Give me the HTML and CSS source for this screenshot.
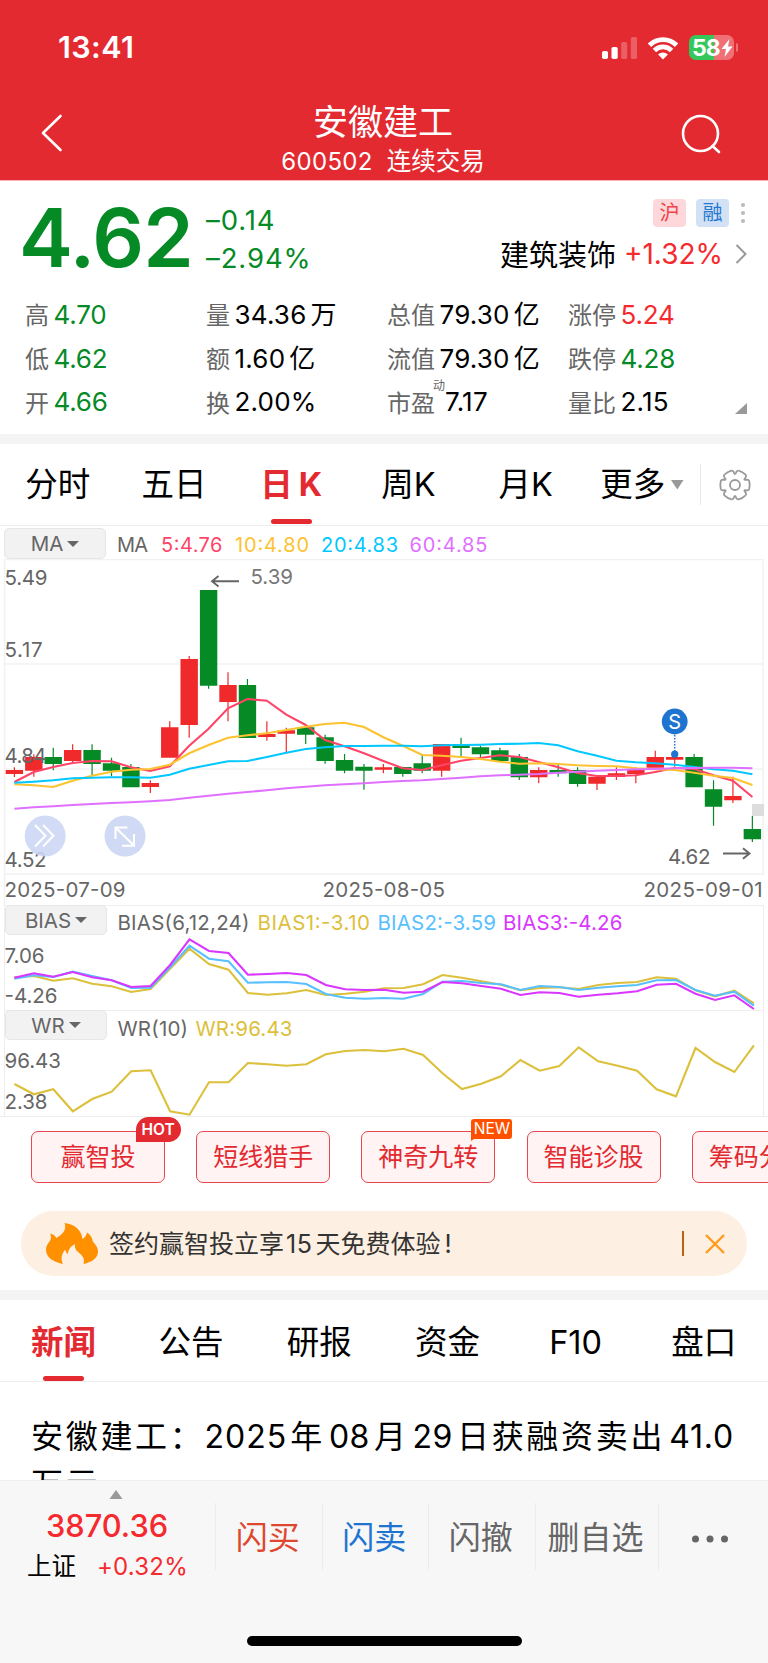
FILE: index.html
```
<!DOCTYPE html>
<html lang="zh-CN">
<head>
    <meta charset="utf-8">
    <title>安徽建工 600502</title>
    <link rel="stylesheet" href="styles.css">
</head>
<body>
<div class="page">
    <header class="header">
        <div class="status-bar">
            <span class="time">13:41</span>
            <svg class="signal" width="36" height="24" viewBox="0 0 36 24" fill="#fff">
                <rect x="0" y="15" width="6" height="8" rx="1.8"/>
                <rect x="9.5" y="11" width="6.2" height="12" rx="1.8"/>
                <rect x="19.2" y="6" width="6" height="17" rx="1.8" opacity=".25"/>
                <rect x="28.8" y="1" width="6.2" height="22" rx="1.8" opacity=".25"/>
            </svg>
            <svg class="wifi" width="30" height="24" viewBox="0 0 30 24" fill="none" stroke="#fff" stroke-width="4.8">
                <path d="M1.5 9.2a19 19 0 0 1 27 0"/>
                <path d="M6.4 14.5a12.2 12.2 0 0 1 17.2 0"/>
                <path d="M15 23.4l-4.9-4.9a6.8 6.8 0 0 1 9.8 0z" fill="#fff" stroke="none"/>
            </svg>
            <div class="battery"><span>58</span><svg width="12" height="18" viewBox="0 0 11 18"><path d="M8 0L0 10h4.5L3 18l8-10.500H6.500z" fill="#fff"/></svg></div>
        </div>
        <div class="nav">
            <svg class="back" width="24" height="40" viewBox="0 0 24 40" fill="none" stroke="#fff" stroke-width="2.6" stroke-linecap="round" stroke-linejoin="round"><path d="M20.500 3L3 20l17.500 17"/></svg>
            <div class="nav-title">
                <h1>安徽建工</h1>
                <p><span class="code">600502</span>连续交易</p>
            </div>
            <svg class="search" width="42" height="42" viewBox="0 0 42 42" fill="none" stroke="#fff" stroke-width="2.600" stroke-linecap="round"><circle cx="20.500" cy="20.500" r="17.500"/><path d="M32.500 33l6.500 6"/></svg>
        </div>
    </header>

    <section class="quote">
        <div class="quote-top">
            <div class="price">4.62</div>
            <div class="change">
                <span>–0.14</span>
                <span>–2.94%</span>
            </div>
            <div class="sector">
                <div class="tags">
                    <span class="tag tag-red">沪</span>
                    <span class="tag tag-blue">融</span>
                    <svg width="6" height="24" viewBox="0 0 6 24" fill="#bbb"><circle cx="3" cy="4" r="2.100"/><circle cx="3" cy="12" r="2.100"/><circle cx="3" cy="20" r="2.100"/></svg>
                </div>
                <div class="sector-row">
                    <span>建筑装饰</span>
                    <b>+1.32%</b>
                    <svg width="12" height="20" viewBox="0 0 12 20" fill="none" stroke="#999" stroke-width="2"><path d="M1.500 1l9 9-9 9"/></svg>
                </div>
            </div>
        </div>
        <div class="stats">
            <div><label>高</label><span class="green">4.70</span></div>
            <div><label>量</label><span>34.36<i>万</i></span></div>
            <div><label>总值</label><span>79.30<i>亿</i></span></div>
            <div><label>涨停</label><span class="red">5.24</span></div>
            <div><label>低</label><span class="green">4.62</span></div>
            <div><label>额</label><span>1.60<i>亿</i></span></div>
            <div><label>流值</label><span>79.30<i>亿</i></span></div>
            <div><label>跌停</label><span class="green">4.28</span></div>
            <div><label>开</label><span class="green">4.66</span></div>
            <div><label>换</label><span>2.00%</span></div>
            <div><label>市盈</label><sup>动</sup><span>7.17</span></div>
            <div><label>量比</label><span>2.15</span><svg class="corner" width="12" height="11"><path d="M12 0v11H0z" fill="#999"/></svg></div>
        </div>
    </section>

    <nav class="k-tabs">
        <a>分时</a>
        <a>五日</a>
        <a class="active">日<em>K</em></a>
        <a>周K</a>
        <a>月K</a>
        <a class="more">更多<svg width="13" height="10"><path d="M0 0h12.500L6.250 9.500z" fill="#999"/></svg></a>
        <svg class="gear" width="34" height="34" viewBox="-17 -17 34 34" fill="none" stroke="#999" stroke-width="1.800">
            <path id="tooth" d="M14.200-4Q15.200 0 14.200 4Q13.700 5.500 12 5.400Q7.400 4.200 10.700 7.700Q11.600 9.100 10.600 10.300"/>
            <use href="#tooth" transform="rotate(60)"/>
            <use href="#tooth" transform="rotate(120)"/>
            <use href="#tooth" transform="rotate(180)"/>
            <use href="#tooth" transform="rotate(240)"/>
            <use href="#tooth" transform="rotate(300)"/>
            <circle r="5"/>
        </svg>
    </nav>

    <!-- K line -->
    <div class="legend legend-ma">
        <button>MA<i></i></button>
        <svg width="640" height="31" font-size="20">
            <text x="7" y="23.500" textLength="31" fill="#666">MA</text>
            <text x="51" y="23.500" textLength="61.500" fill="#ff4468">5:4.76</text>
            <text x="125" y="23.500" textLength="74" fill="#fdc22f">10:4.80</text>
            <text x="211" y="23.500" textLength="77" fill="#00c8ff">20:4.83</text>
            <text x="299.500" y="23.500" textLength="78" fill="#e070ff">60:4.85</text>
        </svg>
    </div>
    <svg id="kline" class="chart" width="768" height="346" viewBox="0 559 768 346">
        <path class="grid" d="M4.500 905V559.500H763V874H4.500M4.500 664H763M4.500 769H763"/>
        <g id="candles"></g>
        <rect x="752" y="804" width="12" height="12" fill="#ddd"/>
        <g class="axis">
            <text x="4.500" y="585" textLength="43">5.49</text>
            <text x="4.500" y="657" textLength="38">5.17</text>
            <text x="4.500" y="762.500" textLength="42">4.84</text>
            <text x="4.500" y="867.300" textLength="42">4.52</text>
            <text x="250.500" y="583.500" textLength="42.500" fill="#777">5.39</text>
            <text x="668" y="863.500" textLength="42.500">4.62</text>
            <text x="4.500" y="897" textLength="121">2025-07-09</text>
            <text x="322.500" y="897" textLength="122.500">2025-08-05</text>
            <text x="643.500" y="897" textLength="119">2025-09-01</text>
        </g>
        <path d="M239 581.300H212M218.500 576l-6.500 5.300 6.500 5.300M723 853.500h26M743 848.300l6.500 5.200-6.500 5.200" fill="none" stroke="#666" stroke-width="1.900"/>
        <path d="M674.700 735v18" stroke="#1f74d0" stroke-width="1.500" stroke-dasharray="1.500 1.500"/>
        <circle cx="674.700" cy="754.200" r="3.600" fill="#1f74d0"/>
        <circle cx="674.700" cy="721.500" r="12.900" fill="#1f74d0"/>
        <text x="674.700" y="729.300" text-anchor="middle" font-size="20" fill="#fff">S</text>
        <g fill="none" stroke="#fff" stroke-width="2.100">
            <circle cx="45.200" cy="836" r="20.500" fill="#ccd6f4" fill-opacity=".88" stroke="none"/>
            <circle cx="125" cy="836" r="20.500" fill="#d0daf5" stroke="none"/>
            <path d="M35 825l10.500 10.700L35 846.500M43 825l10.500 10.700L43 846.500M115.500 839v-11.500h12M134 834v11.800h-12M116.500 828.500l17 16.500"/>
        </g>
    </svg>

    <!-- BIAS -->
    <div class="pane">
        <div class="legend">
            <button>BIAS<i></i></button>
            <svg width="640" height="31" font-size="20.500">
                <text x="5.500" y="24" textLength="132" fill="#666">BIAS(6,12,24)</text>
                <text x="145.500" y="24" textLength="112.500" fill="#dcc03c">BIAS1:-3.10</text>
                <text x="265.500" y="24" textLength="118.500" fill="#58c0ff">BIAS2:-3.59</text>
                <text x="391" y="24" textLength="119.500" fill="#d936ff">BIAS3:-4.26</text>
            </svg>
        </div>
        <svg id="bias" class="chart" width="768" height="74" viewBox="0 937 768 74">
            <g class="axis">
                <text x="4.500" y="962.700" textLength="40">7.06</text>
                <text x="4.500" y="1003" textLength="53">-4.26</text>
            </g>
        </svg>
    </div>

    <!-- WR -->
    <div class="pane pane-wr">
        <div class="legend">
            <button>WR<i></i></button>
            <svg width="640" height="31" font-size="20.500">
                <text x="5.500" y="24.500" textLength="70.500" fill="#666">WR(10)</text>
                <text x="83.500" y="24.500" textLength="97" fill="#dcc03c">WR:96.43</text>
            </svg>
        </div>
        <svg id="wr" class="chart" width="768" height="74" viewBox="0 1042 768 74">
            <g class="axis">
                <text x="4.500" y="1068.300" textLength="56.500">96.43</text>
                <text x="4.500" y="1109" textLength="43">2.38</text>
            </g>
        </svg>
    </div>

    <div class="chips">
        <a>赢智投<span class="hot">HOT</span></a>
        <a>短线猎手</a>
        <a>神奇九转<span class="new">NEW</span></a>
        <a>智能诊股</a>
        <a>筹码分布</a>
    </div>

    <div class="banner">
        <svg width="52" height="41" viewBox="0 0 52 41"><path d="M18.500 0C29 1.500 35.500 7 36.500 16c2.500-1.500 4-3.500 4.500-6.500C44.500 12 46 14 46.500 17.500c1 3 5.500 5 5.500 11 0 6.500-6 10.500-14.500 12.500 2.500-7-4-10.500-7-13.500-1.500-2-1.800-4-1.500-6.500-4.500 2.500-6.800 5.500-7 10-1.500-1-2.500-2.500-2.700-4.500-3.500 4-5 9-2.300 14.500C6 38.500 0 34 0 26.500c0-5 4-7.500 4.800-10.500.4-2 0-3.500-.5-5.500 3 .8 5 2.300 6 4.500C17 11 21 6.500 18.500 0z" fill="#ff9000"/></svg>
        <p>签约赢智投立享<span>15</span>天免费体验<small>!</small></p>
        <i class="bar"></i>
        <svg width="20" height="20" viewBox="0 0 20 20" stroke="#ff9a1a" stroke-width="2.400"><path d="M1 1l18 18M19 1L1 19"/></svg>
    </div>

    <nav class="news-tabs">
        <a class="active">新闻</a>
        <a>公告</a>
        <a>研报</a>
        <a>资金</a>
        <a>F10</a>
        <a>盘口</a>
    </nav>
    <div class="news">安徽建工：<span class="n1">2025</span>年<span class="n2">08</span>月<span class="n2">29</span>日获融资卖出<span class="n3">41.0</span><br>万元</div>

    <footer class="toolbar">
        <div class="actions">
            <div class="index">
                <svg width="14" height="9"><path d="M7 0l6.500 9H.500z" fill="#999"/></svg>
                <strong>3870.36</strong>
                <p>上证<span>+0.32%</span></p>
            </div>
            <a class="buy">闪买</a>
            <a class="sell">闪卖</a>
            <a>闪撤</a>
            <a class="wide">删自选</a>
            <a class="dots"><svg width="38" height="8" fill="#666"><circle cx="4.500" cy="4" r="3.500"/><circle cx="19" cy="4" r="3.500"/><circle cx="33.500" cy="4" r="3.500"/></svg></a>
        </div>
        <div class="home"></div>
    </footer>
</div>

<script>
    // all y values are in 1/3 px, measured from the top of each drawing area
    const X0 = 14.4, STEP = 19.42;

    // [up(1) / down(0), high, body top, body bottom, low]
    const days = [
        [1,682,690,702,711],[1,643,651,692,710],[0,623,651,672,691],[1,613,630,663,668],[0,613,630,672,705],
        [0,653,670,692,709],[0,672,681,742,742],[1,721,729,741,759],[1,544,562,653,653],[1,348,357,555,593],
        [0,150,150,437,446],[1,397,435,486,544],[0,417,435,594,594],[1,544,582,591,602],[1,563,571,581,639],
        [0,560,562,584,612],[0,584,592,663,671],[0,642,660,692,700],[0,672,680,692,749],[1,672,682,689,700],
        [0,680,681,702,710],[0,642,670,692,700],[1,612,612,692,710],[0,593,612,624,648],[0,617,622,643,652],
        [0,623,631,663,663],[0,642,651,712,720],[1,682,690,712,730],[0,672,690,700,710],[0,682,690,732,740],
        [1,709,710,731,750],[1,682,700,711,720],[1,682,690,702,730],[1,632,651,683,683],[1,640,651,659,680],
        [0,642,651,742,742],[0,721,748,800,857],[1,710,768,781,789],[0,828,867,898,906]
    ];

    const ma = {
        '#ff4468': [726,696,681,669,663,664,682,693,679,617,566,505,477,482,524,555,600,619,640,663,685,690,676,662,654,646,651,666,682,699,708,708,706,696,684,687,706,722,771],
        '#fdc22f': [733,736,741,722,707,695,689,687,674,640,615,593,586,580,570,560,552,548,561,592,617,645,647,651,657,665,671,670,672,676,678,679,685,688,690,698,707,714,735],
        '#00c8ff': [728,725,721,715,713,712,712,713,704,686,675,664,663,651,638,627,622,618,618,617,617,619,616,615,614,612,611,609,616,634,647,662,667,670,674,681,688,692,703],
        '#e070ff': [806,802,799,795,792,789,787,784,780,773,767,761,756,751,745,740,736,733,730,726,723,721,717,713,709,706,704,702,698,695,692,690,688,687,685,684,683,683,685]
    };
    const bias = {
        '#dcc03c': [292,288,302,295,311,319,336,327,266,206,252,269,339,344,340,330,345,341,335,325,324,313,285,293,304,314,331,324,322,327,315,309,306,292,296,331,349,332,370],
        '#58c0ff': [296,286,291,275,288,301,324,323,262,197,236,244,308,307,306,312,342,353,356,354,356,342,305,303,309,313,330,318,321,330,323,319,315,301,300,330,347,335,377],
        '#d936ff': [293,280,290,276,292,301,321,318,255,178,213,219,284,282,279,285,315,328,330,329,338,335,306,310,318,326,345,337,339,350,344,340,334,314,311,341,360,346,387]
    };
    const wr = {
        '#dcc03c': [612,643,628,694,657,635,574,571,694,704,607,607,549,553,557,553,523,513,510,514,506,525,580,627,611,589,540,572,558,502,544,557,572,628,649,504,546,576,496]
    };

    function lines(series, top, step) {
        return Object.entries(series).map(([color, ys]) => {
            const points = ys.map((y, i) => `${(X0 + i * step).toFixed(1)},${(top + y / 3).toFixed(1)}`).join(' ');
            return `<polyline points="${points}" fill="none" stroke="${color}" stroke-width="2.1"/>`;
        }).join('');
    }

    document.getElementById('candles').innerHTML = days.map(([up, high, open, close, low], i) => {
        const x = X0 + i * STEP;
        const color = up ? '#f0292b' : '#058a26';
        return `<path d="M${x - 8.7} ${540 + open / 3}h17.4V${540 + close / 3}h-17.4zM${x - 0.6} ${540 + high / 3}h1.2V${540 + low / 3}h-1.2z" fill="${color}"/>`;
    }).join('') + lines(ma, 540, STEP);
    document.getElementById('bias').insertAdjacentHTML('beforeend', lines(bias, 880, 19.46));
    document.getElementById('wr').insertAdjacentHTML('beforeend', lines(wr, 880, 19.46));
</script>
</body>
</html>
```

FILE: styles.css
```
* {
    box-sizing: border-box;
}

body {
    margin: 0;
    background: #fff;
    color: #000;
    font-family: Inter, "Noto Sans CJK SC", sans-serif;
}

h1, p {
    margin: 0;
    font-weight: 400;
}

i, em {
    font-style: normal;
}

svg {
    display: block;
    flex: none;
}

.page {
    width: 768px;
    height: 1663px;
    overflow: hidden;
    display: flex;
    flex-direction: column;
}

.page > * {
    flex: none;
}

/* header */
.header {
    height: 181px;
    background: #e42a31;
    border-bottom: 1px solid #fbb4b8;
    color: #fff;
}

.status-bar {
    display: flex;
    align-items: center;
    height: 95px;
    padding: 0 34px 0 58px;
}

.time {
    flex: 1;
    margin-top: -2px;
    font-size: 30.500px;
    font-weight: 600;
    letter-spacing: .4px;
}

.wifi {
    margin: 0 11px 0 10px;
}

.battery {
    position: relative;
    display: flex;
    align-items: center;
    gap: 1px;
    width: 45px;
    height: 25px;
    padding-left: 3px;
    border-radius: 7px;
    background: linear-gradient(to right, #34c759 25px, #ef7075 25px);
    font-size: 23px;
    font-weight: 700;
    letter-spacing: -1px;
}

.battery::after {
    content: "";
    position: absolute;
    left: 47px;
    top: 8px;
    width: 2px;
    height: 9px;
    border-radius: 0 3px 3px 0;
    background: #ef7075;
}

.nav {
    display: flex;
    justify-content: space-between;
    padding: 0 46px 0 40px;
}

.back {
    margin-top: 18px;
}

.search {
    margin-top: 18px;
}

.nav-title {
    padding-left: 22px;
    text-align: center;
}

.nav-title h1 {
    margin-top: 7px;
    font-size: 35px;
    line-height: 40px;
}

.nav-title p {
    font-size: 24.500px;
    line-height: 38px;
}

.code {
    margin-right: 14px;
    font-size: 24px;
    letter-spacing: .3px;
}

/* quote */
.quote {
    height: 263px;
    border-bottom: 10px solid #f4f4f4;
}

.quote-top {
    display: flex;
    height: 112px;
    padding: 0 21px 0 19px;
}

.price {
    width: 187px;
    padding-top: 7px;
    color: #058a26;
    font-size: 81px;
    font-weight: 600;
    line-height: 100px;
    letter-spacing: -.8px;
}

.change {
    display: flex;
    flex-direction: column;
    padding-top: 21px;
    color: #058a26;
    font-size: 27.500px;
    line-height: 37.500px;
    letter-spacing: .9px;
}

.sector {
    margin-left: auto;
    padding-top: 18px;
}

.tags {
    display: flex;
    justify-content: flex-end;
    align-items: center;
    gap: 10px;
    padding-right: 1px;
}

.tags svg {
    margin-left: 1px;
}

.tag {
    width: 33px;
    height: 28px;
    border-radius: 4px;
    font-size: 20px;
    line-height: 29px;
    text-align: center;
}

.tag-red {
    background: #fdd7d9;
    color: #f0444a;
}

.tag-blue {
    background: #d2e1f5;
    color: #2478cf;
}

.sector-row {
    display: flex;
    align-items: center;
    height: 54px;
    font-size: 29px;
}

.sector-row span {
    margin-top: -2px;
}

.sector-row b {
    margin: 0 12px 0 8px;
    color: #f52a2f;
    font-size: 28px;
    font-weight: 400;
}

.stats {
    display: grid;
    grid-template-columns: repeat(4, 181px);
    grid-auto-rows: 43.700px;
    padding-left: 25px;
}

.stats div {
    display: flex;
    align-items: center;
    font-size: 26px;
}

.stats label {
    margin: -2px 4.500px 0 0;
    color: #666;
    font-size: 24px;
}

.stats span {
    line-height: 40px;
    letter-spacing: .2px;
}

.stats i {
    margin-left: 4px;
    font-size: 26px;
}

.stats sup {
    width: 12px;
    margin-left: -6.500px;
    padding-bottom: 32px;
    color: #666;
    font-size: 12px;
    line-height: 12px;
}

.green {
    color: #058a26;
}

.red {
    color: #f52a2f;
}

.stats .green,
.stats .red {
    letter-spacing: -.2px;
}

.corner {
    margin: 12px 2px 0 auto;
}

/* period tabs */
.k-tabs {
    display: flex;
    align-items: center;
    height: 82px;
    border-bottom: 1px solid #eee;
    font-size: 32.500px;
}

.k-tabs a {
    position: relative;
    width: 117.200px;
    line-height: 86px;
    text-align: center;
}

.k-tabs a:first-child {
    width: 115.500px;
}

.k-tabs .active {
    color: #e42a31;
    font-weight: 700;
}

.k-tabs em {
    margin-left: 6px;
}

.k-tabs .active::after,
.news-tabs .active::after {
    content: "";
    position: absolute;
    left: 50%;
    bottom: 4px;
    width: 41px;
    height: 5px;
    margin-left: -20.500px;
    border-radius: 3px;
    background: #e42a31;
}

.k-tabs .more {
    display: flex;
    align-items: center;
    gap: 6px;
    width: 117px;
    height: 41px;
    padding-left: 16px;
    border-right: 1px solid #e6e6e6;
}

.gear {
    margin-left: 16.500px;
}

/* charts */
.legend {
    display: flex;
    height: 31px;
    padding-left: 4px;
}

.legend-ma {
    margin-top: 2px;
}

.legend button {
    display: flex;
    flex: none;
    justify-content: center;
    align-items: center;
    gap: 4px;
    width: 102px;
    height: 31px;
    margin-right: 4px;
    padding: 0;
    border: 1px solid #e6e6e6;
    border-radius: 5px;
    background: #f2f2f2;
    color: #666;
    font: 20.500px Inter, sans-serif;
}

.legend button i {
    border: 6px solid transparent;
    border-top: 6px solid #666;
    border-bottom: 0;
}

.legend text,
.chart text {
    font-family: Inter, sans-serif;
}

.grid {
    fill: none;
    stroke: #f2f2f2;
    stroke-width: 1.500px;
}

.axis {
    fill: #666;
    font-size: 20.500px;
}

.pane {
    width: 760px;
    height: 105px;
    margin-left: 4px;
    border: 1px solid #eee;
    border-bottom: 0;
}

.pane-wr {
    height: 106px;
}

.pane .legend {
    padding-left: 0;
}

.pane button {
    height: 30px;
    margin: -1px 5px 0 0;
}

.pane .chart {
    margin-left: -5px;
}

/* tools */
.chips {
    display: flex;
    gap: 31.200px;
    height: 95px;
    padding: 14px 0 0 31px;
    border-top: 1px solid #eee;
}

.chips a {
    position: relative;
    flex: none;
    width: 134px;
    height: 52px;
    border: 1px solid #e8474f;
    border-radius: 7px;
    background: #fff3f3;
    color: #e42a31;
    font-size: 25px;
    line-height: 51px;
    text-align: center;
}

.hot,
.new {
    position: absolute;
    font-size: 15.500px;
    color: #fff;
}

.hot {
    left: 103.500px;
    top: -15px;
    width: 45px;
    height: 25px;
    border-radius: 13px 13px 13px 0;
    background: #e42a31;
    font-weight: 600;
    line-height: 25px;
}

.new {
    left: 109px;
    top: -13px;
    width: 41px;
    height: 20px;
    border-radius: 3px 3px 3px 0;
    background: #ff5000;
    line-height: 20px;
}

.new::after {
    content: "";
    position: absolute;
    left: 0;
    top: 20px;
    border-top: 2px solid #ff5000;
    border-right: 3px solid transparent;
}

.banner {
    display: flex;
    align-items: center;
    height: 65px;
    margin: 0 21px 14px;
    padding: 0 22px 0 25px;
    border-radius: 33px;
    background: #fdefe1;
}

.banner p {
    flex: 1;
    margin-left: 11px;
    color: #333;
    font-size: 25px;
    line-height: 36px;
}

.banner p span {
    margin: 0 3px 0 2px;
    letter-spacing: .6px;
}

.banner small {
    margin-left: 4px;
    font-size: 25px;
}

.bar {
    width: 2px;
    height: 25px;
    margin-right: 21px;
    background: #b5660a;
}

/* news */
.news-tabs {
    display: flex;
    height: 92px;
    border-top: 10px solid #f4f4f4;
    border-bottom: 1px solid #eee;
    font-size: 32.500px;
}

.news-tabs a {
    position: relative;
    width: 128.200px;
    line-height: 86px;
    text-align: center;
}

.news-tabs .active {
    width: 127px;
    color: #e42a31;
    font-weight: 700;
}

.news-tabs .active::after {
    bottom: 0;
}

.news {
    height: 98px;
    padding: 31px 0 0 31px;
    overflow: hidden;
    font-size: 32px;
    line-height: 47px;
    letter-spacing: 2.700px;
    white-space: nowrap;
}

.n1 {
    letter-spacing: 1px;
    margin-right: 3px;
}

.n2 {
    letter-spacing: .5px;
    margin: 0 4px 0 4px;
}

.n3 {
    letter-spacing: .8px;
    margin-left: 4px;
}

/* bottom toolbar */
.toolbar {
    height: 183px;
    border-top: 1px solid #f0f0f0;
    background: #f7f7f7;
}

.actions {
    display: flex;
    align-items: flex-start;
    height: 155px;
}

.index {
    display: flex;
    flex-direction: column;
    width: 215px;
    padding: 9px 0 0 27px;
}

.index svg {
    margin-left: 82px;
}

.index strong {
    margin: 7px 0 0 19px;
    color: #f52a2f;
    font-size: 30.800px;
    font-weight: 500;
    line-height: 40px;
}

.index p {
    font-size: 24.500px;
    line-height: 40px;
    white-space: nowrap;
}

.index p span {
    margin-left: 21px;
    color: #f52a2f;
    font-size: 24px;
    letter-spacing: .2px;
}

.actions a {
    width: 106.500px;
    height: 67px;
    margin-top: 22px;
    padding-right: 2px;
    border-left: 1px solid #ececec;
    color: #666;
    font-size: 32px;
    line-height: 70px;
    text-align: center;
}

.actions .buy {
    color: #e0472f;
}

.actions .sell {
    color: #1f74d0;
}

.actions .wide {
    width: 123px;
}

.actions .dots {
    width: 110px;
    padding: 32px 0 0 32px;
}

.home {
    width: 275px;
    height: 10px;
    margin-left: 247px;
    border-radius: 5px;
    background: #000;
}
```
